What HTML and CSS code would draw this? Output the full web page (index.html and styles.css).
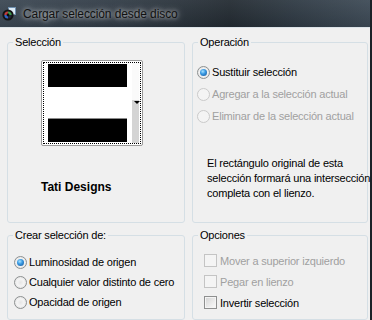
FILE: index.html
```html
<!DOCTYPE html>
<html lang="es">
<head>
  <meta charset="UTF-8">
  <title>Cargar selección desde disco</title>
  <link rel="stylesheet" href="styles.css">
</head>
<body>
  <div class="window">
    <div class="titlebar">
      <svg class="app-icon" width="14" height="14" viewBox="0 0 14 14">
        <rect x="6.5" y="0.5" width="7" height="7" fill="#dbe9f5" stroke="#6d8fae"/>
        <circle cx="6" cy="8" r="5.6" fill="#141414"/>
        <circle cx="6" cy="8" r="3.6" fill="#23263a"/>
        <path d="M6 4.4 A3.6 3.6 0 0 1 9.6 8 L6 8 Z" fill="#3c9a48"/>
        <path d="M2.4 8 A3.6 3.6 0 0 1 6 4.4 L6 8 Z" fill="#c23b3b"/>
        <path d="M6 11.6 A3.6 3.6 0 0 1 2.4 8 L6 8 Z" fill="#2f64c4"/>
        <circle cx="6" cy="8" r="1.4" fill="#0a0a0a"/>
      </svg>
      <span class="title">Cargar selección desde disco</span>
    </div>

    <div class="client">
      <!-- Selección -->
      <fieldset class="group">
        <legend>Selección</legend>
        <div class="selection-body">
          <div class="preview">
            <div class="preview-inner">
              <div class="thumb">
                <div class="band black"></div>
                <div class="band white"></div>
                <div class="band black"></div>
              </div>
              <div class="strip"><span class="arrow"></span></div>
            </div>
          </div>
          <div class="preview-name">Tati Designs</div>
        </div>
      </fieldset>

      <!-- Operación -->
      <fieldset class="group">
        <legend>Operación</legend>
        <div class="operation-body">
          <label class="option"><span class="radio checked"></span>Sustituir selección</label>
          <label class="option disabled"><span class="radio"></span>Agregar a la selección actual</label>
          <label class="option disabled"><span class="radio"></span>Eliminar de la selección actual</label>
          <p class="note">El rectángulo original de esta<br>selección formará una intersección<br>completa con el lienzo.</p>
        </div>
      </fieldset>

      <!-- Crear selección de -->
      <fieldset class="group">
        <legend>Crear selección de:</legend>
        <div class="source-body">
          <label class="option short"><span class="radio checked"></span>Luminosidad de origen</label>
          <label class="option short"><span class="radio"></span>Cualquier valor distinto de cero</label>
          <label class="option short"><span class="radio"></span>Opacidad de origen</label>
        </div>
      </fieldset>

      <!-- Opciones -->
      <fieldset class="group">
        <legend>Opciones</legend>
        <div class="options-body">
          <label class="option mid disabled"><span class="check"></span>Mover a superior izquierdo</label>
          <label class="option mid disabled"><span class="check"></span>Pegar en lienzo</label>
          <label class="option mid"><span class="check"></span>Invertir selección</label>
        </div>
      </fieldset>
    </div>
  </div>
</body>
</html>
```

FILE: styles.css
```css
/* Base */
body {
  margin: 0;
  background: #f0f0f0;
  font-family: "Liberation Sans", Arial, sans-serif;
  font-size: 11px;
  letter-spacing: -0.2px;
  color: #000;
  overflow: hidden;
}

.window {
  width: 372px;
  height: 320px;
  box-sizing: border-box;
  border-right: 2px solid #1b2228;
  display: flex;
  flex-direction: column;
}

/* Title bar */
.titlebar {
  height: 27px;
  flex: none;
  display: flex;
  align-items: center;
  padding-left: 2px;
  border-bottom: 1px solid #dce3e8;
  background:
    linear-gradient(to bottom, rgba(255, 255, 255, 0.06), rgba(0, 0, 0, 0.08)),
    linear-gradient(to right, #3b4753 0%, #303a44 35%, #232b32 62%, #2f3a44 80%, #3d4a56 100%);
}

.app-icon {
  margin-top: 1px;
  margin-right: 7px;
}

.title {
  font-size: 12px;
  letter-spacing: -0.1px;
  color: #111;
  text-shadow: 0 0 4px rgba(255, 255, 255, 0.75), 0 0 8px rgba(255, 255, 255, 0.5);
}

/* Client area */
.client {
  flex: 1;
  display: grid;
  grid-template-columns: 178px 176px;
  grid-template-rows: 187px 91px;
  column-gap: 7px;
  row-gap: 6px;
  padding: 8px 0 0 7px;
}

.group {
  margin: 0;
  padding: 0;
  min-width: 0;
  border: 1px solid #d5dfe5;
  border-radius: 3px;
}

.group legend {
  margin-left: 5px;
  padding: 0 2px;
  line-height: 13px;
}

/* Selección */
.selection-body {
  padding: 11px 0 0 33px;
}

.preview {
  width: 102px;
  height: 86px;
  box-sizing: border-box;
  border: 1px solid #9a9a9a;
  border-radius: 2px;
  background: #fff;
  padding: 1px;
}

.preview-inner {
  height: 100%;
  box-sizing: border-box;
  border: 1px dotted #000;
  display: flex;
  padding: 1px 0 0 4px;
}

.thumb {
  width: 79px;
  display: flex;
  flex-direction: column;
}

.band.black {
  height: 23px;
  background: #000;
}

.band.white {
  height: 31px;
  background: #fff;
  border-bottom: 1px solid #8a8a8a;
}

.strip {
  width: 7px;
  margin-left: 5px;
  margin-top: -1px;
  background: linear-gradient(to bottom, #fafafa 0, #fafafa 37px, #d4d4d4 37px);
  display: flex;
  justify-content: center;
  padding-top: 38px;
  box-sizing: border-box;
}

.arrow {
  width: 0;
  height: 0;
  margin-left: 3px;
  border-left: 3px solid transparent;
  border-right: 3px solid transparent;
  border-top: 3px solid #000;
}

.preview-name {
  margin-top: 34px;
  font-size: 12px;
  font-weight: bold;
  line-height: 15px;
  letter-spacing: 0;
}

/* Options */
.operation-body {
  padding: 12px 0 0 4px;
}

.source-body {
  padding: 10px 0 0 6px;
}

.options-body {
  padding: 8px 0 0 11px;
}

.option {
  display: flex;
  align-items: center;
  height: 22px;
  white-space: nowrap;
}

.option.short {
  height: 20px;
}

.option.mid {
  height: 21px;
}

.option.disabled {
  color: #a0a0a0;
}

.radio {
  width: 13px;
  height: 13px;
  box-sizing: border-box;
  border-radius: 50%;
  border: 1px solid #8d9091;
  background: radial-gradient(circle at 50% 50%, #e6e6e6 0, #f4f4f4 45%, #d9d9d9 100%);
  margin-right: 2px;
  display: grid;
  place-items: center;
}

.radio.checked::after {
  content: "";
  width: 7px;
  height: 7px;
  border-radius: 50%;
  background: radial-gradient(circle at 40% 35%, #a9e2ff 0, #3a9be4 40%, #134f93 100%);
}

.option.disabled .radio {
  border-color: #cacaca;
  background: #f4f4f4;
}

.check {
  width: 13px;
  height: 13px;
  box-sizing: border-box;
  border: 1px solid #8e8f8f;
  background: linear-gradient(135deg, #d2d2d2 0%, #ececec 60%, #fbfbfb 100%);
  box-shadow: inset 0 0 0 1px #f4f4f4;
  margin-right: 3px;
}

.option.disabled .check {
  border-color: #c4c4c4;
  background: #f4f4f4;
  box-shadow: none;
}

.note {
  margin: 29px 0 0 10px;
  line-height: 15px;
  white-space: nowrap;
}
```
